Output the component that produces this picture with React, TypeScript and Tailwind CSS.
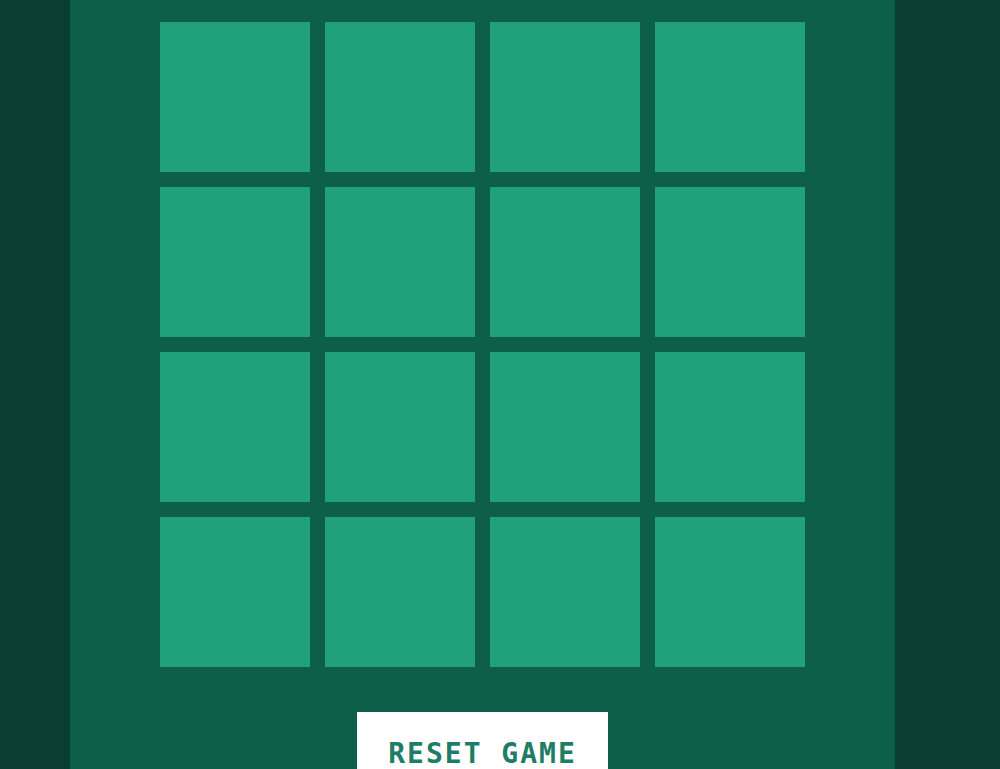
export default function App() {
  const tiles = Array.from({ length: 16 }, (_, i) => i)

  return (
    <div className="min-h-[769px] h-[769px] overflow-hidden bg-[#0a3d33]">
      <div className="ml-[70px] flex h-full w-[825px] flex-col items-center bg-[#0d5f4a] pt-[22px]">
        <div className="grid grid-cols-[repeat(4,150px)] gap-[15px]">
          {tiles.map((t) => (
            <div key={t} className="h-[150px] w-[150px] bg-[#21a07c]" />
          ))}
        </div>
        <button
          type="button"
          className="mt-[45px] shrink-0 bg-white px-[31px] pt-[21px] pb-6 text-[28px] font-bold tracking-[2px] text-[#1e7d66]"
          style={{ fontFamily: '"DejaVu Sans Mono", monospace' }}
        >
          RESET GAME
        </button>
      </div>
    </div>
  )
}
